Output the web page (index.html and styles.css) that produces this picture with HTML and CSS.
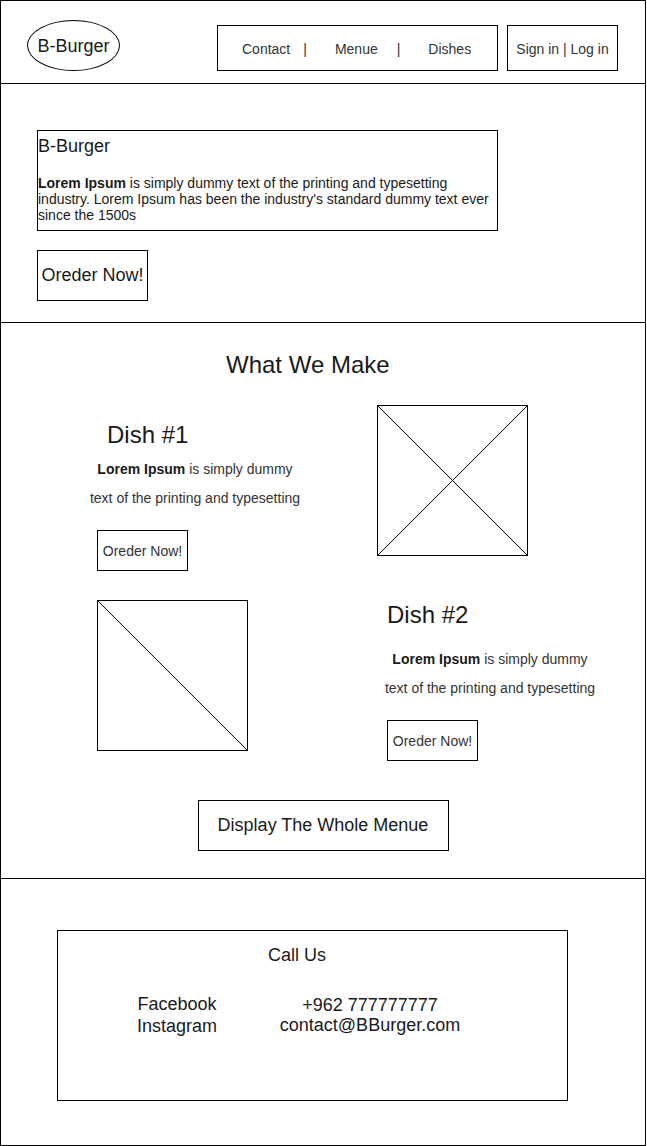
FILE: index.html
```html
<!DOCTYPE html>
<html lang="en">
<head>
    <meta charset="UTF-8">
    <meta name="viewport" content="width=device-width, initial-scale=1.0">
    <title>B-Burger</title>
    <link rel="stylesheet" href="styles.css">
</head>
<body>

<div class="page">
    <!-- Cabecera -->
    <header class="header">
        <div class="logo">B-Burger</div>
        <nav class="nav">
            <span class="nav-link contact">Contact</span><span class="sep">|</span><span class="nav-link menue">Menue</span><span class="sep">|</span><span class="nav-link">Dishes</span>
        </nav>
        <div class="auth">Sign in | Log in</div>
    </header>

    <!-- Hero -->
    <section class="hero">
        <div class="hero-box">
            <div class="hero-title">B-Burger</div>
            <p class="hero-text"><b>Lorem Ipsum</b> is simply dummy text of the printing and typesetting<br>industry. Lorem Ipsum has been the industry's standard dummy text ever<br>since the 1500s</p>
        </div>
        <button class="btn btn-order">Oreder Now!</button>
    </section>

    <!-- Platos -->
    <section class="menu">
        <h2 class="menu-title">What We Make</h2>

        <div class="dish dish-one">
            <div class="dish-info">
                <h3 class="dish-name">Dish #1</h3>
                <p class="dish-text"><b>Lorem Ipsum</b> is simply dummy<br>text of the printing and typesetting</p>
                <button class="btn btn-small">Oreder Now!</button>
            </div>
            <div class="dish-pic">
                <svg viewBox="0 0 149 149" preserveAspectRatio="none">
                    <line x1="0" y1="0" x2="149" y2="149"/>
                    <line x1="149" y1="0" x2="0" y2="149"/>
                </svg>
            </div>
        </div>

        <div class="dish dish-two">
            <div class="dish-pic">
                <svg viewBox="0 0 149 149" preserveAspectRatio="none">
                    <line x1="0" y1="0" x2="149" y2="149"/>
                </svg>
            </div>
            <div class="dish-info">
                <h3 class="dish-name">Dish #2</h3>
                <p class="dish-text"><b>Lorem Ipsum</b> is simply dummy<br>text of the printing and typesetting</p>
                <button class="btn btn-small">Oreder Now!</button>
            </div>
        </div>

        <button class="btn btn-menue">Display The Whole Menue</button>
    </section>

    <!-- Pie -->
    <footer class="footer">
        <div class="call-box">
            <div class="call-title">Call Us</div>
            <div class="call-row">
                <div class="social">Facebook<br>Instagram</div>
                <div class="contact-info">+962 777777777<br>contact@BBurger.com</div>
            </div>
        </div>
    </footer>
</div>

</body>
</html>
```

FILE: styles.css
```css
* {
    box-sizing: border-box;
}
body {
    margin: 0;
    background-color: #fff;
    font-family: "Liberation Sans", Arial, sans-serif;
    color: #1a1a1a;
}
.page {
    width: 646px;
    border: 1px solid #000;
}
/* Cabecera */
.header {
    display: flex;
    align-items: flex-start;
    height: 83px;
    border-bottom: 1px solid #000;
}
.logo {
    display: flex;
    justify-content: center;
    align-items: center;
    width: 93px;
    height: 51px;
    margin: 19px 0 0 26px;
    border: 1px solid #000;
    border-radius: 50%;
    font-size: 18px;
    line-height: 20px;
}
.nav {
    display: flex;
    align-items: center;
    width: 281px;
    height: 46px;
    margin: 24px 0 0 97px;
    padding: 2px 0 0 24px;
    border: 1px solid #000;
    font-size: 14px;
    line-height: 16px;
    color: #333;
}
.nav-link.contact {
    margin-right: 13px;
}
.nav-link.menue {
    margin-right: 19px;
}
.sep {
    margin-right: 28px;
}
.auth {
    display: flex;
    justify-content: center;
    align-items: center;
    width: 111px;
    height: 46px;
    margin: 24px 0 0 9px;
    padding-top: 2px;
    border: 1px solid #000;
    font-size: 14px;
    line-height: 16px;
    color: #333;
}
/* Hero */
.hero {
    padding: 46px 0 21px 36px;
    border-bottom: 1px solid #000;
}
.hero-box {
    width: 461px;
    height: 101px;
    padding-top: 5px;
    border: 1px solid #000;
}
.hero-title {
    font-size: 18px;
    line-height: 21px;
    margin-bottom: 18px;
}
.hero-text {
    margin: 0;
    font-size: 14px;
    line-height: 16px;
}
.btn {
    display: flex;
    justify-content: center;
    align-items: center;
    padding: 0;
    background-color: #fff;
    border: 1px solid #000;
    font-family: inherit;
    color: #1a1a1a;
}
.btn-order {
    width: 111px;
    height: 51px;
    margin-top: 19px;
    font-size: 18px;
}
.btn-small {
    width: 91px;
    height: 41px;
    margin-top: 17px;
    font-size: 14px;
    color: #333;
}
/* Platos */
.menu {
    padding: 28px 0 27px 0;
    border-bottom: 1px solid #000;
}
.menu-title {
    margin: 0 0 26px 0;
    padding-left: 225px;
    font-size: 24px;
    line-height: 28px;
    font-weight: normal;
}
.dish {
    display: flex;
    align-items: flex-start;
}
.dish-one {
    padding-left: 84px;
}
.dish-two {
    margin-top: 29px;
    padding-left: 96px;
}
.dish-one .dish-info {
    width: 292px;
    padding-top: 16px;
}
.dish-two .dish-info {
    width: 230px;
    margin-left: 127px;
    padding-top: 1px;
}
.dish-name {
    margin: 0;
    font-size: 24px;
    line-height: 28px;
    font-weight: normal;
}
.dish-one .dish-name {
    margin-left: 22px;
}
.dish-two .dish-name {
    margin-left: 12px;
}
.dish-text {
    margin: 6px 0 0 0;
    font-size: 14px;
    line-height: 29px;
    text-align: center;
    white-space: nowrap;
    color: #333;
}
.dish-text b {
    color: #1a1a1a;
}
.dish-one .dish-text {
    width: 220px;
}
.dish-two .dish-text {
    width: 230px;
    margin-top: 16px;
}
.dish-one .btn-small {
    margin-left: 12px;
}
.dish-two .btn-small {
    margin-left: 12px;
}
.dish-pic {
    width: 151px;
    height: 151px;
    border: 1px solid #000;
}
.dish-pic svg {
    display: block;
    width: 149px;
    height: 149px;
}
.dish-pic line {
    stroke: #000;
    stroke-width: 1;
}
.btn-menue {
    width: 251px;
    height: 51px;
    margin: 39px auto 0 auto;
    font-size: 18px;
}
/* Pie */
.footer {
    padding: 51px 0 44px 56px;
}
.call-box {
    width: 511px;
    height: 171px;
    padding-top: 14px;
    border: 1px solid #000;
    font-size: 18px;
    line-height: 21px;
}
.call-title {
    padding-left: 210px;
}
.call-row {
    display: flex;
    align-items: flex-start;
    margin-top: 27px;
}
.social {
    width: 80px;
    margin-left: 79px;
    line-height: 22px;
    text-align: center;
}
.contact-info {
    width: 200px;
    margin-left: 53px;
    padding-top: 2px;
    line-height: 20px;
    text-align: center;
}
```
